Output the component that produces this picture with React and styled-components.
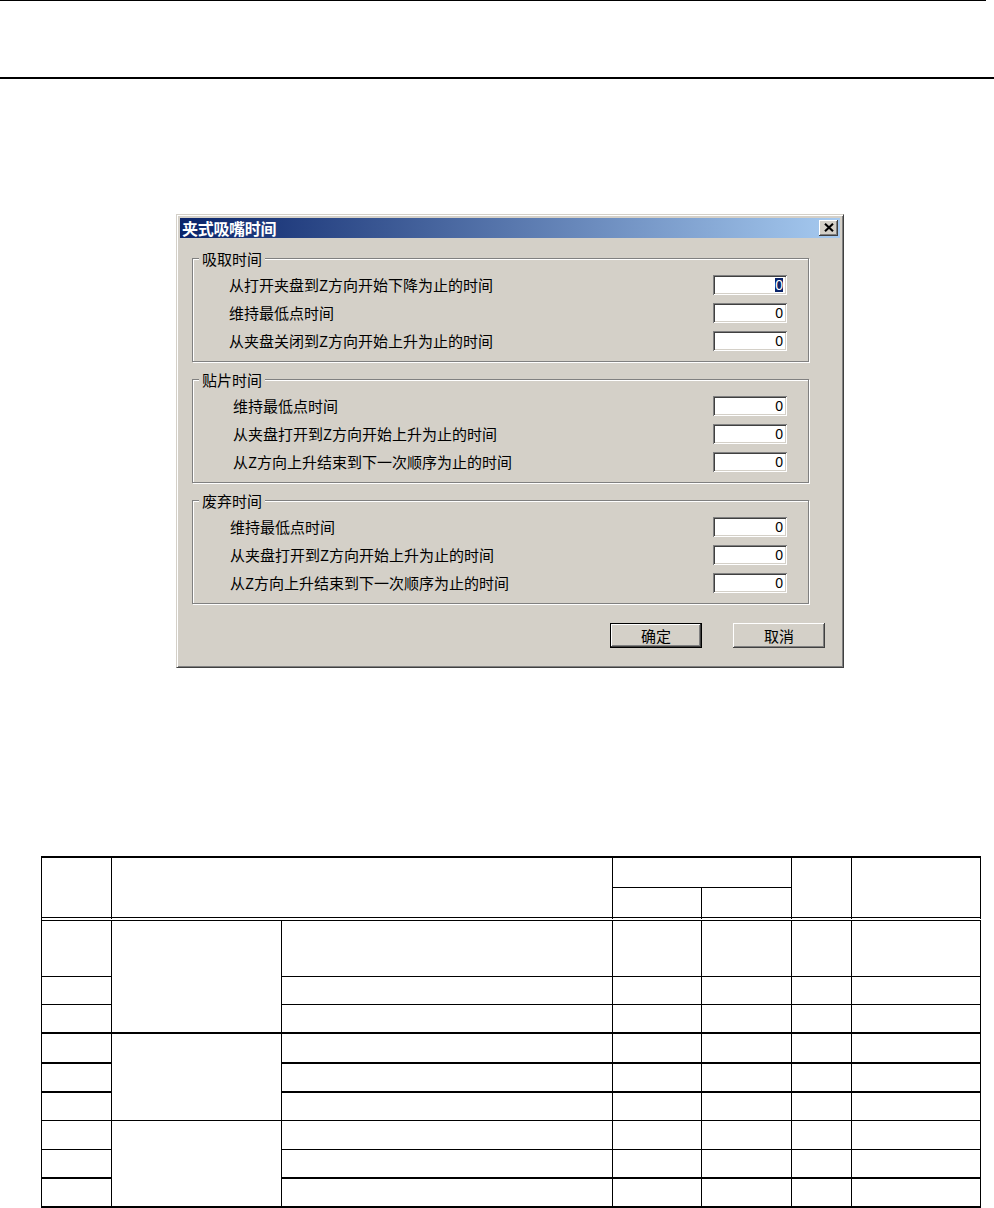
import React from "react";
import styled, { createGlobalStyle } from "styled-components";

const Global = createGlobalStyle`
  html, body { margin: 0; padding: 0; background: #fff; }
  body { font-family: "Noto Sans CJK SC", "Noto Sans", sans-serif; }
  * { box-sizing: border-box; }
`;

const FACE = "#d4d0c8";

const Page = styled.div`
  width: 994px;
  height: 1208px;
  display: flex;
  flex-direction: column;
  overflow: hidden;
  background: #fff;
`;

const TopRule = styled.div`
  flex: none;
  width: 986px;
  height: 1px;
  background: #000;
`;

const HeaderBand = styled.div`
  flex: none;
  height: 76px;
`;

const ThickRule = styled.div`
  flex: none;
  height: 2px;
  background: #000;
`;

const Figure = styled.div`
  flex: none;
  margin-top: 135px;
  padding-left: 176px;
`;

const Window = styled.div`
  width: 668px;
  height: 454px;
  background: ${FACE};
  border: 1px solid;
  border-color: ${FACE} #404040 #404040 ${FACE};
  box-shadow: inset 1px 1px 0 #fff, inset -1px -1px 0 #808080;
  padding: 3px;
  display: flex;
  flex-direction: column;
`;

const Caption = styled.div`
  flex: none;
  height: 20px;
  display: flex;
  align-items: center;
  justify-content: space-between;
  padding: 0 2px;
  background: linear-gradient(to right, #0a246a 0%, #a6caf0 100%);
`;

const Title = styled.span`
  color: #fff;
  font-weight: 700;
  font-size: 16px;
  line-height: 20px;
  letter-spacing: -0.3px;
`;

const CloseButton = styled.div`
  width: 19px;
  height: 16px;
  background: ${FACE};
  box-shadow: inset -1px -1px 0 #404040, inset 1px 1px 0 #fff,
    inset -2px -2px 0 #808080;
  display: flex;
  align-items: center;
  justify-content: center;
  padding-bottom: 1px;
`;

const Body = styled.div`
  flex: 1;
  display: flex;
  flex-direction: column;
  align-items: flex-start;
  padding-left: 12px;
`;

const GroupBox = styled.div`
  position: relative;
  width: 617px;
  margin-top: ${(p) => p.$gap}px;
  border: 1px solid #808080;
  box-shadow: inset 1px 1px 0 #fff, 1px 1px 0 #fff;
  padding: 16px 21px 10px ${(p) => p.$indent}px;
  display: flex;
  flex-direction: column;
  gap: 8px;
`;

const Legend = styled.span`
  position: absolute;
  top: -9px;
  left: 6px;
  padding: 0 3px;
  background: ${FACE};
  font-size: 15px;
  line-height: 17px;
  color: #000;
`;

const FieldRow = styled.div`
  display: flex;
  align-items: center;
  justify-content: space-between;
  height: 20px;
`;

const FieldLabel = styled.span`
  font-size: 15px;
  line-height: 20px;
  color: #000;
  white-space: nowrap;
`;

const NumberBox = styled.div`
  width: 74px;
  height: 20px;
  background: #fff;
  box-shadow: inset 1px 1px 0 #808080, inset -1px -1px 0 #fff,
    inset 2px 2px 0 #404040, inset -2px -2px 0 ${FACE};
  display: flex;
  align-items: center;
  justify-content: flex-end;
  padding-right: 4px;
  font-family: "Liberation Sans", Arial, sans-serif;
  font-size: 14px;
  color: #000;
`;

const Selected = styled.span`
  background: #0a246a;
  color: #fff;
  line-height: 14px;
`;

const ButtonRow = styled.div`
  align-self: stretch;
  display: flex;
  justify-content: flex-end;
  gap: 31px;
  padding-right: 15px;
  margin-top: 19px;
`;

const PushButton = styled.div`
  width: 92px;
  height: 25px;
  display: flex;
  align-items: center;
  justify-content: center;
  font-size: 15px;
  color: #000;
  background: ${FACE};
  border: ${(p) => (p.$default ? "1px solid #000" : "0")};
  box-shadow: inset -1px -1px 0 #404040, inset 1px 1px 0 #fff,
    inset -2px -2px 0 #808080;
`;

const Grid = styled.div`
  flex: none;
  margin-top: 188px;
  margin-left: 41px;
  width: 940px;
  display: grid;
  grid-template-columns: 70px 170px 331px 89px 90px 60px 129px;
  grid-template-rows: 30px 33px 56px 28px 29px 30px 29px 28px 29px 29px 29px;
  border-left: 1px solid #000;
  border-top: 2px solid #000;
`;

const borderFor = (b) =>
  b === "double"
    ? "4px double #000"
    : b === "thick"
    ? "2px solid #000"
    : "1px solid #000";

const Cell = styled.div`
  grid-column: ${(p) => p.$col};
  grid-row: ${(p) => p.$row};
  border-right: 1px solid #000;
  border-bottom: ${(p) => borderFor(p.$bottom)};
`;

const CloseGlyph = () => (
  <svg width="10" height="9" viewBox="0 0 10 9">
    <path d="M1 0.8 L9 8.2 M9 0.8 L1 8.2" stroke="#000" strokeWidth="2.1" />
  </svg>
);

const groups = [
  {
    title: "吸取时间",
    gap: 20,
    indent: 36,
    rows: [
      "从打开夹盘到Z方向开始下降为止的时间",
      "维持最低点时间",
      "从夹盘关闭到Z方向开始上升为止的时间",
    ],
  },
  {
    title: "贴片时间",
    gap: 17,
    indent: 40,
    rows: [
      "维持最低点时间",
      "从夹盘打开到Z方向开始上升为止的时间",
      "从Z方向上升结束到下一次顺序为止的时间",
    ],
  },
  {
    title: "废弃时间",
    gap: 17,
    indent: 37,
    rows: [
      "维持最低点时间",
      "从夹盘打开到Z方向开始上升为止的时间",
      "从Z方向上升结束到下一次顺序为止的时间",
    ],
  },
];

const bodyBottoms = [
  "thin",
  "thin",
  "thick",
  "thick",
  "thick",
  "thin",
  "thin",
  "thick",
  "thick",
];

function Dialog() {
  return (
    <Window>
      <Caption>
        <Title>夹式吸嘴时间</Title>
        <CloseButton>
          <CloseGlyph />
        </CloseButton>
      </Caption>
      <Body>
        {groups.map((g, gi) => (
          <GroupBox key={g.title} $gap={g.gap} $indent={g.indent}>
            <Legend>{g.title}</Legend>
            {g.rows.map((r, ri) => (
              <FieldRow key={r}>
                <FieldLabel>{r}</FieldLabel>
                <NumberBox>
                  {gi === 0 && ri === 0 ? <Selected>0</Selected> : "0"}
                </NumberBox>
              </FieldRow>
            ))}
          </GroupBox>
        ))}
        <ButtonRow>
          <PushButton $default>确定</PushButton>
          <PushButton>取消</PushButton>
        </ButtonRow>
      </Body>
    </Window>
  );
}

function SpecTable() {
  const cells = [
    { col: "1", row: "1 / 3", bottom: "double" },
    { col: "2 / 4", row: "1 / 3", bottom: "double" },
    { col: "4 / 6", row: "1", bottom: "thin" },
    { col: "6", row: "1 / 3", bottom: "double" },
    { col: "7", row: "1 / 3", bottom: "double" },
    { col: "4", row: "2", bottom: "double" },
    { col: "5", row: "2", bottom: "double" },
  ];
  bodyBottoms.forEach((b, i) => {
    const row = String(3 + i);
    [1, 3, 4, 5, 6, 7].forEach((c) =>
      cells.push({ col: String(c), row, bottom: b })
    );
    if (i % 3 === 0) {
      cells.push({
        col: "2",
        row: `${3 + i} / ${6 + i}`,
        bottom: bodyBottoms[i + 2],
      });
    }
  });
  return (
    <Grid>
      {cells.map((c, i) => (
        <Cell key={i} $col={c.col} $row={c.row} $bottom={c.bottom} />
      ))}
    </Grid>
  );
}

export default function App() {
  return (
    <>
      <Global />
      <Page>
        <TopRule />
        <HeaderBand />
        <ThickRule />
        <Figure>
          <Dialog />
        </Figure>
        <SpecTable />
      </Page>
    </>
  );
}
